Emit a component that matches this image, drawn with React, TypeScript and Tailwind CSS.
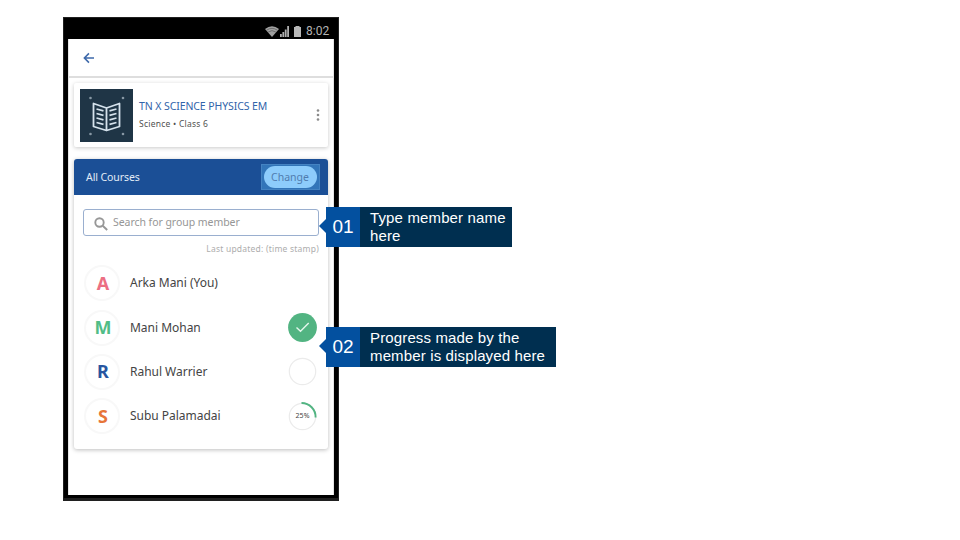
import React from "react";

function StatusBar() {
  return (
    <div className="flex h-[21px] shrink-0 items-center justify-end bg-black pr-[5px] pt-[5px]">
      <svg className="h-[11px] w-[14px]" viewBox="0 0 14 11">
        <path d="M0 3Q7-2.5 14 3L7 11Z" fill="#a0a0a0" />
        <path d="M1.6 4.2Q7 .5 12.4 4.2M3.2 6Q7 3.3 10.8 6" fill="none" stroke="#4c4c4c" strokeWidth=".6" />
      </svg>
      <svg className="ml-px h-[11px] w-[9px]" viewBox="0 0 9 11" fill="#b0b0b0">
        <path d="M0 8h1.8v3H0zM2.4 6h1.8v5H2.4zM4.8 3.5h1.8V11H4.8zM7.2 0H9v11H7.2z" />
      </svg>
      <svg className="ml-[5px] h-[11px] w-[7px]" viewBox="0 0 7 11" fill="#b8b8b8">
        <path d="M1.500 0h4v1H7v10H0V1h1.500z" />
      </svg>
      <span className="ml-[5px] w-[23px] whitespace-nowrap font-['Roboto',sans-serif] text-[12px] leading-[14px] text-[#b4b4b4]">8:02</span>
    </div>
  );
}

function CourseIcon() {
  return (
    <svg className="h-[53px] w-[53px] shrink-0" viewBox="0 0 53 53">
      <rect width="53" height="53" fill="#1f3546" />
      <g fill="#8898a5">
        <circle cx="10.5" cy="9" r="1.3" />
        <circle cx="43" cy="9" r="1.3" />
        <circle cx="10.5" cy="45" r="1.3" />
        <circle cx="43" cy="45" r="1.3" />
      </g>
      <g fill="none" stroke="#d5e2ec" strokeWidth="1.8" strokeLinejoin="round">
        <path d="M13.500 14.500 26.500 19 39.500 14.500V37.500L26.500 41.500 13.500 37.500ZM26.500 19V41" />
        <path d="M16.500 20l7 1.800M16.500 24.500l7 1.800M16.500 29l7 1.800M16.500 33.500l7 1.800M36.500 20l-7 1.800M36.500 24.500l-7 1.800M36.500 29l-7 1.800M36.500 33.500l-7 1.800" />
      </g>
    </svg>
  );
}

function Check() {
  return (
    <svg className="h-[29px] w-[29px]" viewBox="0 0 29 29">
      <circle cx="14.500" cy="14.500" r="14.400" fill="#52b482" />
      <path d="M8.500 14.500l4 3.700 8.200-8.200" fill="none" stroke="#e5f7ed" strokeWidth="1.400" />
    </svg>
  );
}

function Ring({ partial = false }: { partial?: boolean }) {
  return (
    <div className="relative flex h-[29px] w-[29px] items-center justify-center">
      <svg className="absolute inset-0" viewBox="0 0 29 29" fill="none">
        <circle cx="14.500" cy="14.500" r="13.200" stroke="#ebebeb" strokeWidth="1.200" />
        {partial && <path d="M13.500 1A14 14 0 0 1 27.600 15.500" stroke="#52b482" strokeWidth="1.900" />}
      </svg>
      {partial && <span className="relative text-[7px] leading-[10px] tracking-[.1px] text-[#444]">25%</span>}
    </div>
  );
}

interface MemberProps {
  letter: string;
  color: string;
  name: string;
  children?: React.ReactNode;
}

function Member({ letter, color, name, children }: MemberProps) {
  return (
    <div className="flex h-[44.400px] items-center pl-[10px] pr-[11px]">
      <div className={`flex h-[36px] w-[36px] items-center justify-center rounded-full border-2 border-[#f8f8f8] pb-px pl-[2px] text-[18px] leading-[20px] font-bold ${color}`}>{letter}</div>
      <span className="ml-[10px] flex-1 whitespace-nowrap text-[12px] tracking-[-0.02px] text-[#444]">{name}</span>
      {children}
    </div>
  );
}

interface CalloutProps {
  number: string;
  place: string;
  lines: string[];
}

function Callout({ number, place, lines }: CalloutProps) {
  return (
    <div className={`absolute flex h-[40px] font-['Liberation_Sans',Arial,sans-serif] text-white ${place}`}>
      <svg className="absolute left-[-7px] top-[11px] h-[16px] w-[8px]" viewBox="0 0 9 16" preserveAspectRatio="none">
        <path d="M9 0L0 8l9 8z" fill="#03509f" />
      </svg>
      <div className="flex w-[34px] shrink-0 items-center justify-center bg-[#03509f] pt-px text-[19px]">{number}</div>
      <div className="flex flex-1 flex-col justify-center whitespace-nowrap bg-[#002f50] pl-[10px] text-[15px] leading-[18px] tracking-[.14px]">
        {lines.map((line) => (
          <div key={line}>{line}</div>
        ))}
      </div>
    </div>
  );
}

export default function App() {
  return (
    <main className="relative h-[540px] w-[960px] overflow-hidden bg-white pl-[63px] pt-[17px] font-['Noto_Sans',sans-serif]">
      <div className="flex h-[484px] w-[276px] flex-col border border-[#202020] border-b-[3px] bg-black px-[4px] pb-[3px]">
        <StatusBar />
        <div className="min-h-0 flex-1 border-x border-[#e4e4e4] bg-white">
          <header className="flex h-[39px] items-center border-b-2 border-[#dedede] pl-[14px]">
            <svg className="h-[12px] w-[11px]" viewBox="0 0 12 12" fill="none" stroke="#3e69aa" strokeWidth="1.700">
              <path d="M6.500 1 1.500 6l5 5M1.500 6H12" />
            </svg>
          </header>
          <section className="ml-[5px] mt-[5px] flex h-[64px] w-[254px] items-center rounded-[2px] bg-white pl-[6px] shadow-[0_1px_4px_#c9c9c9]">
            <CourseIcon />
            <div className="ml-[6px] flex-1 whitespace-nowrap">
              <div className="text-[10.500px] leading-[16px] tracking-[-0.09px] text-[#3264aa]">TN X SCIENCE PHYSICS EM</div>
              <div className="mt-[2px] text-[8.500px] leading-[16px] tracking-[.24px] text-[#505050]">Science • Class 6</div>
            </div>
            <svg className="mr-[8px] h-[12px] w-[4px]" viewBox="0 0 4 12" fill="#8b8b8b">
              <circle cx="2" cy="1.500" r="1.300" />
              <circle cx="2" cy="6" r="1.300" />
              <circle cx="2" cy="10.500" r="1.300" />
            </svg>
          </section>
          <section className="ml-[5px] mt-[12px] h-[290px] w-[254px] rounded-[3px] bg-white shadow-[0_1px_4px_#bdbdbd]">
            <div className="flex h-[36px] items-center justify-between rounded-t-[3px] bg-[#1b4f96] pl-[12px] pr-[8px]">
              <span className="pt-px text-[10.500px] tracking-[-0.08px] text-[#e2ecf7]">All Courses</span>
              <div className="flex h-[26px] w-[59px] items-center justify-center border border-[#4483c2] bg-[#3275b9]">
                <span className="flex h-[22px] w-[53px] items-center justify-center rounded-full bg-[#8dccfb] pr-px pt-px text-[10.500px] text-[#507caf]">Change</span>
              </div>
            </div>
            <div className="mx-[9px] mt-[14px] flex h-[27px] items-center rounded-[3px] border-[1.500px] border-[#9aafcf] pl-[10px]">
              <svg className="mt-[2px] h-[14px] w-[14px]" viewBox="0 0 14 14" fill="none" stroke="#979797" strokeWidth="1.900">
                <circle cx="5.500" cy="5.500" r="4.200" />
                <path d="M8.700 8.700l4.500 4.300" />
              </svg>
              <span className="ml-[5px] whitespace-nowrap pt-px text-[10.500px] tracking-[-0.05px] text-[#969696]">Search for group member</span>
            </div>
            <div className="mr-[9px] mt-[6px] whitespace-nowrap text-right text-[8.500px] leading-[14px] tracking-[.22px] text-[#adadad]">Last updated: (time stamp)</div>
            <div className="mt-[5px]">
              <Member letter="A" color="text-[#ec6f83]" name="Arka Mani (You)" />
              <Member letter="M" color="text-[#51bd87]" name="Mani Mohan"><Check /></Member>
              <Member letter="R" color="text-[#2855a0]" name="Rahul Warrier"><Ring /></Member>
              <Member letter="S" color="text-[#e77539]" name="Subu Palamadai"><Ring partial /></Member>
            </div>
          </section>
        </div>
      </div>
      <Callout number="01" place="left-[326px] top-[207px] w-[186px]" lines={["Type member name", "here"]} />
      <Callout number="02" place="left-[326px] top-[327px] w-[230px]" lines={["Progress made by the", "member is displayed here"]} />
    </main>
  );
}
